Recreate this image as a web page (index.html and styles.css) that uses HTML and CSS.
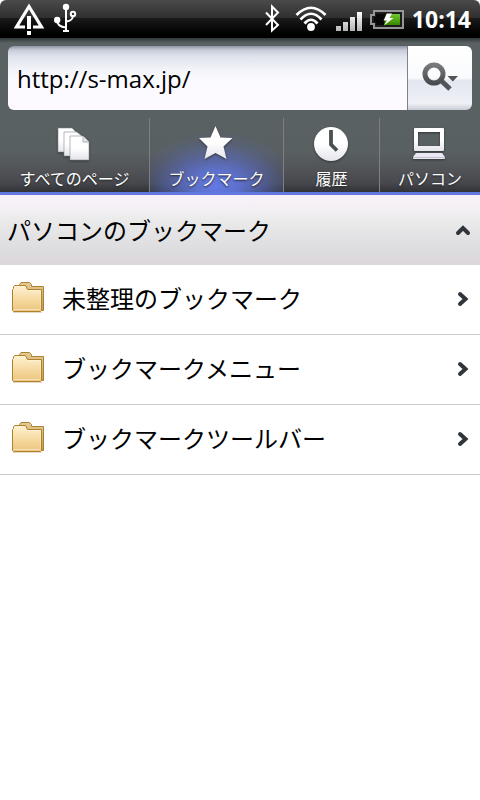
FILE: index.html
```html
<!DOCTYPE html>
<html lang="ja">
<head>
<meta charset="utf-8">
<meta name="viewport" content="width=device-width, initial-scale=1">
<title>ブックマーク</title>
<link rel="stylesheet" href="styles.css">
</head>
<body>
<svg class="defs" width="0" height="0" aria-hidden="true">
  <defs>
    <linearGradient id="paper" x1="0" y1="0" x2="0" y2="1">
      <stop offset="0" stop-color="#fff"/><stop offset=".5" stop-color="#fff"/><stop offset="1" stop-color="#e4e4ec"/>
    </linearGradient>
    <linearGradient id="bars" gradientUnits="userSpaceOnUse" x1="0" y1="12" x2="0" y2="31">
      <stop offset="0" stop-color="#fff"/><stop offset="1" stop-color="#b4b4b4"/>
    </linearGradient>
    <linearGradient id="charge" x1="0" y1="0" x2="0" y2="1">
      <stop offset="0" stop-color="#72c436"/><stop offset=".5" stop-color="#54aa14"/><stop offset="1" stop-color="#388400"/>
    </linearGradient>
    <linearGradient id="lens" x1="0" y1="0" x2="0" y2="1">
      <stop offset="0" stop-color="#777b7d"/><stop offset="1" stop-color="#484c4e"/>
    </linearGradient>
    <linearGradient id="folder-front" x1="0" y1="0" x2="0" y2="1">
      <stop offset="0" stop-color="#fff3d4"/><stop offset=".55" stop-color="#f5d9a0"/><stop offset="1" stop-color="#ecc47c"/>
    </linearGradient>
    <linearGradient id="folder-back" x1="0" y1="0" x2="0" y2="1">
      <stop offset="0" stop-color="#e3cb96"/><stop offset="1" stop-color="#c79a4c"/>
    </linearGradient>
    <symbol id="folder" viewBox="0 0 34 32">
      <path d="M2 31.500H31" stroke="#e4d8c4"/>
      <path d="M8.500 5V3.500L10 1.500H18.500L20.500 3.500V5.500H32.500V29.500H9Z" fill="url(#folder-back)" stroke="#a98234"/>
      <path d="M1.500 29.500V8.500L2.500 7.500V5.500L4 4.500H14.500L16.500 8.500H30.500V29.500L29.500 30.500H2.500Z" fill="url(#folder-front)" stroke="#b0822c"/>
      <path d="M3 28.500H29" stroke="#fff" stroke-opacity=".45"/>
      <path d="M17 9.500H29.500V28" fill="none" stroke="#fff" stroke-opacity=".3"/>
    </symbol>
    <symbol id="chevron" viewBox="0 0 12 16">
      <path d="M3 3 8.500 8 3 13" fill="none" stroke="#30353b" stroke-width="4" stroke-linecap="round"/>
    </symbol>
  </defs>
</svg>

<div class="status">
  <svg width="34" height="38" viewBox="12 0 34 38" role="img" aria-label="警告">
    <path d="M25 27H16.500L29 6.500 41.500 27H33" fill="none" stroke="#fff" stroke-width="3.200"/>
    <path d="M27 16H31V29H27ZM27 31H31V35H27Z" fill="#fff"/>
  </svg>
  <svg width="24" height="38" viewBox="53 0 24 38" role="img" aria-label="USB">
    <g fill="none" stroke="#fff" stroke-width="2">
      <path d="M66 7V31M57 20C57 25 60 27 66 27.500M73 15C73 20 70 21 66 21.500"/>
      <circle cx="73" cy="14" r="2.200"/>
    </g>
    <circle cx="66" cy="7" r="3.200" fill="#fff"/><circle cx="57.200" cy="20" r="3.200" fill="#fff"/>
    <path d="M63 30H69V32H63Z" fill="#fff"/>
  </svg>
  <span class="spacer"></span>
  <svg width="24" height="38" viewBox="264 0 24 38" role="img" aria-label="Bluetooth">
    <path d="M266 12.500 278 25 272 30.500V6.500L278 12.500 266 25" fill="none" stroke="#fff" stroke-width="2"/>
  </svg>
  <svg width="32" height="38" viewBox="295 0 32 38" role="img" aria-label="Wi-Fi">
    <g fill="none" stroke="#fff" stroke-width="2.700">
      <path d="M296.500 15Q311 .5 325.500 15M300.500 19.500Q311 8 321.500 19.500M304.500 23.500Q311 16 317.500 23.500"/>
    </g>
    <circle cx="311" cy="27" r="3.900" fill="#fff"/>
  </svg>
  <svg width="29" height="38" viewBox="334 0 29 38" role="img" aria-label="電波">
    <path d="M336 26H341V31H336ZM343 22H348V31H343ZM350 17H355V31H350ZM357 12H362V31H357Z" fill="url(#bars)"/>
  </svg>
  <svg width="35" height="38" viewBox="370 0 35 38" role="img" aria-label="充電中">
    <path d="M374 11H403V28H374V24H371V15H374Z" fill="#1c1c1c" stroke="#969696" stroke-width="2"/>
    <path d="M376 14H390V25H376V22H374V17H376Z" fill="#080808"/>
    <path d="M386 14H400V25H384Z" fill="url(#charge)"/>
    <path d="M387 13.500H392L389.500 18H393.500L384 25.500 387 20.500H383.500Z" fill="#fff"/>
  </svg>
  <time class="clock">10:14</time>
</div>

<header class="toolbar">
  <form class="search">
    <input class="url" type="text" value="http://s-max.jp/" aria-label="URL">
    <button class="go" type="button" aria-label="検索">
      <svg width="38" height="32" viewBox="0 0 38 32" aria-hidden="true">
        <circle cx="13" cy="12" r="9" fill="none" stroke="url(#lens)" stroke-width="5"/>
        <path d="M19.500 18 29 27" stroke="#505456" stroke-width="5"/>
        <path d="M26.500 14H37L31.750 19.500Z" fill="#505456"/>
      </svg>
    </button>
  </form>
</header>

<nav class="tabs">
  <a class="tab" href="#pages">
    <svg width="36" height="36" viewBox="0 0 36 36" aria-hidden="true">
      <g fill="url(#paper)" stroke="#888c94" stroke-width=".6">
        <path d="M1 2H15L20 7V26H1Z"/>
        <path d="M7 6H20L26 11V30H7Z"/>
        <path d="M13 10H26L32 16V34H13Z"/>
        <path d="M26 10V16H32" fill="#e4e6ec"/>
      </g>
    </svg>
    <span>すべてのページ</span>
  </a>
  <a class="tab active" href="#bookmarks" aria-current="page">
    <svg width="36" height="36" viewBox="1 0 36 36" aria-hidden="true">
      <path d="M17.500 0 22.500 11.500 34.500 12 25.500 20.500 28.500 33 17.500 27 6.500 33 9.500 20.500 1 12 12.500 11.500Z" fill="url(#paper)"/>
    </svg>
    <span>ブックマーク</span>
  </a>
  <a class="tab" href="#history">
    <svg width="36" height="36" viewBox="1 0 36 36" aria-hidden="true">
      <circle cx="18" cy="18" r="17" fill="url(#paper)"/>
      <path d="M18 4V18.500L24 24.500" fill="none" stroke="#4a5052" stroke-width="3.800"/>
    </svg>
    <span>履歴</span>
  </a>
  <a class="tab" href="#pc">
    <svg width="36" height="36" viewBox="1 0 36 36" aria-hidden="true">
      <path d="M4 2H32Q33 2 33 3V24Q33 25 32 25H4Q3 25 3 24V3Q3 2 4 2ZM7 6V20H29V6Z" fill="url(#paper)" fill-rule="evenodd"/>
      <path d="M5 27H31L34 31V32Q34 33 33 33H3Q2 33 2 32V31Z" fill="#e9e8f4"/>
      <path d="M2 31.500H34" stroke="#c2c2cc"/>
    </svg>
    <span>パソコン</span>
  </a>
</nav>

<main>
  <h1 class="group">
    <button class="group-toggle" type="button" aria-expanded="true">
      <span>パソコンのブックマーク</span>
      <svg width="16" height="12" viewBox="0 0 16 12" aria-hidden="true">
        <path d="M3 9 8 4 13 9" fill="none" stroke="#30353b" stroke-width="4" stroke-linecap="round"/>
      </svg>
    </button>
  </h1>
  <ul class="list">
    <li><a class="row" href="#unsorted"><svg width="34" height="32" aria-hidden="true"><use href="#folder"/></svg><span>未整理のブックマーク</span><svg width="12" height="16" aria-hidden="true"><use href="#chevron"/></svg></a></li>
    <li><a class="row" href="#menu"><svg width="34" height="32" aria-hidden="true"><use href="#folder"/></svg><span>ブックマークメニュー</span><svg width="12" height="16" aria-hidden="true"><use href="#chevron"/></svg></a></li>
    <li><a class="row" href="#toolbar"><svg width="34" height="32" aria-hidden="true"><use href="#folder"/></svg><span>ブックマークツールバー</span><svg width="12" height="16" aria-hidden="true"><use href="#chevron"/></svg></a></li>
  </ul>
</main>
</body>
</html>
```
FILE: styles.css
```css
* {
  box-sizing: border-box;
}

body {
  margin: 0;
  background: #fff;
  color: #000;
  font-family: "Noto Sans CJK JP", sans-serif;
  font-size: 24px;
}

svg {
  display: block;
  flex: none;
}

.defs {
  position: absolute;
}

a {
  color: inherit;
  text-decoration: none;
}

.status {
  display: flex;
  align-items: center;
  gap: 7px;
  height: 38px;
  padding: 0 9px 0 12px;
  background: linear-gradient(#4a4a4a, #303030 46%, #1a1a1a 48%, #000 90%);
  border-radius: 6px 6px 0 0;
  color: #fff;
}

.spacer {
  flex: 1;
}

.clock {
  font-family: "Open Sans", sans-serif;
  font-size: 23px;
  font-weight: 700;
  line-height: 38px;
}

.toolbar {
  padding: 8px;
  background: linear-gradient(#303637, #596163 5px);
}

.search {
  display: flex;
  height: 64px;
  border-radius: 6px;
  overflow: hidden;
}

.url {
  flex: 1;
  min-width: 0;
  padding: 0 9px;
  border: 0;
  background: linear-gradient(#8d95a3, #c6cbd7 4px, #dfe2ec 10px, #f2f4f9 24px, #fbfaff 34px, #fdf9ff);
  color: #000;
  font-family: "Open Sans", sans-serif;
  font-size: 24px;
}

.go {
  display: flex;
  align-items: center;
  justify-content: center;
  width: 65px;
  padding: 0;
  border: 0;
  border-left: 1px solid #7e8387;
  background: linear-gradient(#fff, #fafbfd 50%, #e4e7f0 54%, #eef0f6 90%, #c9ccd6);
}

.tabs {
  display: grid;
  grid-template-columns: 149fr 134fr 96fr 101fr;
  height: 77px;
  border-bottom: 3px solid #6278e0;
  background: linear-gradient(#596163, #596062 45%, #515357 70%, #46484d 88%, #303236);
  color: #fff;
  font-size: 16px;
}

.tab {
  display: flex;
  flex-direction: column;
  align-items: center;
  gap: 4px;
  padding-top: 8px;
  line-height: 24px;
  white-space: nowrap;
  text-shadow: 0 1px 2px #222;
}

.tab + .tab {
  border-left: 1px solid #7b8080;
}

.tab svg {
  filter: drop-shadow(0 1px 1px #303538);
}

.active {
  background: radial-gradient(ellipse 84px 54px at 50% 92%, #6379e4, #6076dce0 28%, #5a6cc890 55%, #5566b040 78%, #5566b000);
}

.group {
  margin: 0;
  font-size: 24px;
  font-weight: 400;
}

.group-toggle {
  display: flex;
  align-items: center;
  justify-content: space-between;
  width: 100%;
  height: 70px;
  padding: 0 9px 0 7px;
  border: 0;
  background: linear-gradient(#f8f2f8, #f3f0f4 20%, #ececed 32%, #e2e1e3 62%, #dcdbdd 80%, #ddd7dc);
  color: #000;
  font: inherit;
}

.list {
  margin: 0;
  padding: 0;
  list-style: none;
}

.row {
  display: flex;
  align-items: center;
  height: 70px;
  padding: 0 11px 2px;
  border-bottom: 1px solid #cbcbcb;
}

.row span {
  flex: 1;
  margin-left: 17px;
}

.group-toggle span,
.row span {
  padding-bottom: 2px;
}

.row svg:first-child {
  margin-bottom: 4px;
}
```
